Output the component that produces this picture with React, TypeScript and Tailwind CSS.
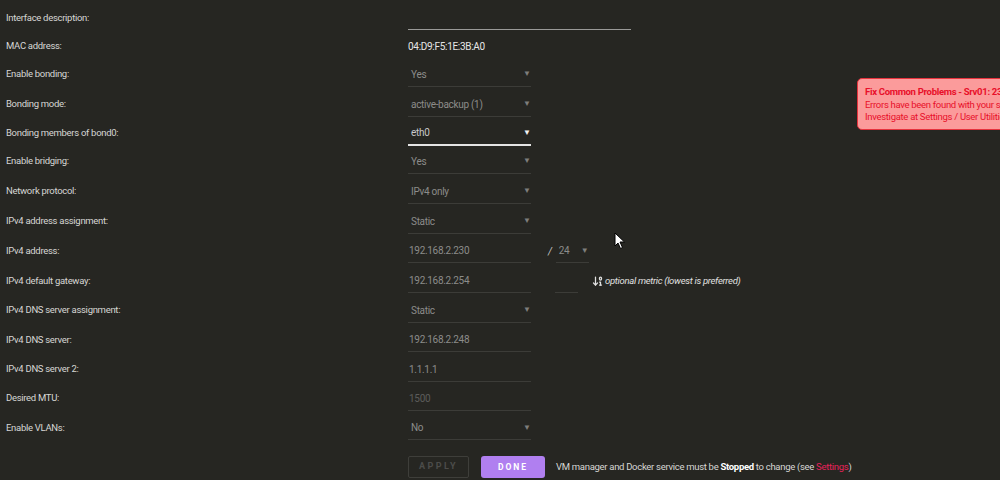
import { ArrowDown01 } from "lucide-react";

const Arrow = ({ className = "" }: { className?: string }) => (
  <span className={`text-[8px] leading-none tracking-normal ${className}`}>▼</span>
);

const Select = ({ value, active = false, width = "w-[123px]" }: { value: string; active?: boolean; width?: string }) => (
  <div
    className={`${width} h-[24px] flex items-center justify-between pl-[3px] ${
      active ? "border-b-2 border-[#e4e4e4] text-[#c8c8c8]" : "border-b border-[#3c3c38] text-[#8c8c8a]"
    }`}
  >
    <span>{value}</span>
    <Arrow className={active ? "text-[#f2f2f2]" : "text-[#7e7e7c]"} />
  </div>
);

const Input = ({ value, dim = false, width = "w-[123px]" }: { value: string; dim?: boolean; width?: string }) => (
  <div
    className={`${width} h-[24px] flex items-center pl-[1px] border-b border-[#3c3c38] ${
      dim ? "text-[#5c5c5a]" : "text-[#8c8c8a]"
    }`}
  >
    {value}
  </div>
);

const rows: { label: string; h: string; field: React.ReactNode }[] = [
  {
    label: "Interface description:",
    h: "h-[28px]",
    field: <div className="w-[223px] h-[24px] border-b border-[#9a9a98]" />,
  },
  {
    label: "MAC address:",
    h: "h-[28px]",
    field: <span className="text-[#e6e6e6]">04:D9:F5:1E:3B:A0</span>,
  },
  { label: "Enable bonding:", h: "h-[29px]", field: <Select value="Yes" /> },
  { label: "Bonding mode:", h: "h-[31px]", field: <Select value="active-backup (1)" /> },
  { label: "Bonding members of bond0:", h: "h-[27px]", field: <Select value="eth0" active /> },
  { label: "Enable bridging:", h: "h-[29px]", field: <Select value="Yes" /> },
  { label: "Network protocol:", h: "h-[31px]", field: <Select value="IPv4 only" /> },
  { label: "IPv4 address assignment:", h: "h-[29px]", field: <Select value="Static" /> },
  {
    label: "IPv4 address:",
    h: "h-[30px]",
    field: (
      <div className="flex items-center">
        <Input value="192.168.2.230" />
        <span className="ml-[17px] mr-[4px] text-[#c8c8c8] italic">/</span>
        <Select value="24" width="w-[33px]" />
      </div>
    ),
  },
  {
    label: "IPv4 default gateway:",
    h: "h-[30px]",
    field: (
      <div className="flex items-center">
        <Input value="192.168.2.254" />
        <div className="ml-[24px] w-[23px] h-[24px] border-b border-[#3c3c38]" />
        <ArrowDown01 className="ml-[14px] w-[12px] h-[12px] text-[#e0e0e0]" strokeWidth={2.5} />
        <span className="ml-[1px] italic text-[9.5px] text-[#e0e0e0]">optional metric (lowest is preferred)</span>
      </div>
    ),
  },
  { label: "IPv4 DNS server assignment:", h: "h-[29px]", field: <Select value="Static" /> },
  { label: "IPv4 DNS server:", h: "h-[30px]", field: <Input value="192.168.2.248" /> },
  { label: "IPv4 DNS server 2:", h: "h-[29px]", field: <Input value="1.1.1.1" /> },
  { label: "Desired MTU:", h: "h-[29px]", field: <Input value="1500" dim /> },
  { label: "Enable VLANs:", h: "h-[30px]", field: <Select value="No" /> },
];

export default function App() {
  return (
    <div className="relative w-[1000px] h-[480px] overflow-hidden bg-[#262622] text-[10px] tracking-[-0.3px] font-['Roboto',sans-serif]">
      <div className="pt-[4px] pl-[6px]">
        {rows.map((row) => (
          <div key={row.label} className={`${row.h} flex items-center`}>
            <div className="w-[402px] text-[9.5px] text-[#d6d6d4]">{row.label}</div>
            {row.field}
          </div>
        ))}

        <div className="mt-[13px] flex items-center">
          <div className="w-[402px]" />
          <button className="w-[61px] h-[22px] rounded-[2px] border border-[#3e3e3a] text-[#4c4c4a] text-[9px] font-bold tracking-[2.4px]">
            APPLY
          </button>
          <button className="ml-[12px] w-[64px] h-[22px] rounded-[3px] bg-[#b07ff0] text-white text-[8.5px] font-bold tracking-[2px]">
            DONE
          </button>
          <span className="ml-[11px] text-[9.5px] text-[#d6d6d4]">
            VM manager and Docker service must be <b className="text-white">Stopped</b> to change (see{" "}
            <span className="text-[#e8225a]">Settings</span>)
          </span>
        </div>
      </div>

      {/* notification */}
      <div className="absolute left-[857px] top-[78px] w-[260px] h-[52px] rounded-[5px] border border-[#e6333e] bg-[#fb9b9b] px-[7px] pt-[7px] text-[9.5px] leading-[12.5px] text-[#e8102a] whitespace-nowrap">
        <div className="font-bold">Fix Common Problems - Srv01: 23 Errors</div>
        <div>Errors have been found with your server.</div>
        <div>Investigate at Settings / User Utilities / Fix Common Problems</div>
      </div>

      {/* mouse cursor */}
      <svg className="absolute left-[614px] top-[232px]" width="12" height="18" viewBox="0 0 12 18">
        <path d="M1 1 L1 14 L4 11 L6.5 16.5 L8.5 15.5 L6 10 L10.5 10 Z" fill="#fff" stroke="#000" strokeWidth="1" strokeLinejoin="round" />
      </svg>
    </div>
  );
}
